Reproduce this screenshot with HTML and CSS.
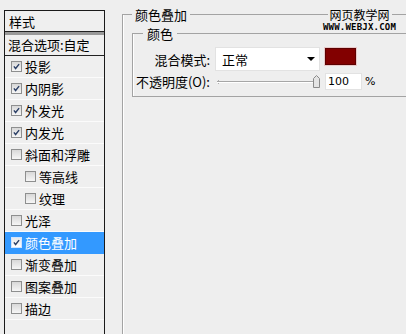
FILE: index.html
```html
<!DOCTYPE html>
<html lang="zh">
<head>
<meta charset="utf-8">
<title>图层样式</title>
<link rel="stylesheet" href="styles.css">
</head>
<body>
<div class="dialog">
  <aside class="styles-panel">
    <div class="panel-head">样式</div>
    <div class="panel-rule"></div>
    <div class="blend-row">混合选项:自定</div>
    <ul class="effects">
      <li class="effect"><span class="cb"><svg viewBox="0 0 11 11"><path d="M2.3 5.4 L4.4 8 L8.7 2.6"/></svg></span>投影</li>
      <li class="effect"><span class="cb"><svg viewBox="0 0 11 11"><path d="M2.3 5.4 L4.4 8 L8.7 2.6"/></svg></span>内阴影</li>
      <li class="effect"><span class="cb"><svg viewBox="0 0 11 11"><path d="M2.3 5.4 L4.4 8 L8.7 2.6"/></svg></span>外发光</li>
      <li class="effect"><span class="cb"><svg viewBox="0 0 11 11"><path d="M2.3 5.4 L4.4 8 L8.7 2.6"/></svg></span>内发光</li>
      <li class="effect"><span class="cb"></span>斜面和浮雕</li>
      <li class="effect sub"><span class="cb"></span>等高线</li>
      <li class="effect sub"><span class="cb"></span>纹理</li>
      <li class="effect"><span class="cb"></span>光泽</li>
      <li class="effect selected"><span class="cb"><svg viewBox="0 0 11 11"><path d="M2.3 5.4 L4.4 8 L8.7 2.6"/></svg></span>颜色叠加</li>
      <li class="effect"><span class="cb"></span>渐变叠加</li>
      <li class="effect"><span class="cb"></span>图案叠加</li>
      <li class="effect"><span class="cb"></span>描边</li>
    </ul>
  </aside>
  <main class="settings">
    <fieldset class="group outer">
      <legend>颜色叠加</legend>
      <fieldset class="group inner">
        <legend>颜色</legend>
        <div class="form">
          <label class="lbl">混合模式:</label>
          <div class="select"><span>正常</span><span class="arrow"></span></div>
          <div class="swatch"></div>
          <label class="lbl">不透明度(O):</label>
          <div class="slider">
            <span class="tick"></span>
            <span class="track"></span>
            <svg class="thumb" viewBox="0 0 7 13"><path d="M0.5 12.5 V3.5 L3.5 0.5 L6.5 3.5 V12.5 Z"/></svg>
          </div>
          <div class="num-cell"><span class="num">100</span><span class="pct">%</span></div>
        </div>
      </fieldset>
    </fieldset>
  </main>
  <div class="watermark">
    <span class="wm-cn">网页教学网</span>
    <span class="wm-en">WWW.WEBJX.COM</span>
  </div>
</div>
</body>
</html>
```
FILE: styles.css
```css
* { box-sizing: border-box; }
html, body {
  margin: 0;
  padding: 0;
  width: 406px;
  height: 334px;
  overflow: hidden;
  background: #eeeeee;
}
body {
  font-family: "Noto Sans CJK SC", "Noto Sans", sans-serif;
  font-size: 13px;
  color: #000;
}
.dialog {
  position: relative;
  display: flex;
  align-items: flex-start;
  height: 334px;
}

/* left list */
.styles-panel {
  margin: 10px 0 0 4px;
  width: 101px;
  flex: none;
  border: 1px solid #1a1a1a;
  border-bottom: none;
  background: #efefef;
  height: 324px;
}
.panel-head {
  height: 21px;
  line-height: 21px;
  padding-left: 4px;
  border-bottom: 1px solid #222;
}
.panel-rule {
  height: 3px;
  background: #999;
}
.blend-row {
  height: 21px;
  line-height: 20px;
  padding-left: 3px;
  border-bottom: 1px solid #222;
}
.effects {
  list-style: none;
  margin: 0;
  padding: 0;
}
.effect {
  display: flex;
  align-items: center;
  height: 22px;
  padding-left: 6px;
  border-bottom: 1px solid #fbfbfb;
  line-height: 21px;
}
.effect.sub { padding-left: 20px; }
.effect.selected {
  background: #3399ff;
  border-bottom-color: #3399ff;
  color: #fff;
}
.cb {
  width: 11px;
  height: 11px;
  margin-right: 3px;
  flex: none;
  border: 1px solid #8e8f8f;
  background: linear-gradient(#d8d8d8, #f6f6f6);
  display: flex;
}
.effect.selected .cb {
  border-color: #d0e4ff;
  background: linear-gradient(#e8e8e8, #ffffff);
}
.cb svg {
  width: 9px;
  height: 9px;
}
.cb path {
  fill: none;
  stroke: #2b3f66;
  stroke-width: 1.7;
}

/* right settings */
.settings {
  flex: none;
  width: 301px;
}
.group {
  margin: 0;
  padding: 0;
  border: 1px solid #a3a3a3;
  border-right: none;
  box-shadow: inset 1px 0 0 #ffffff;
}
.group legend {
  font-size: 13px;
  line-height: 15px;
  height: 15px;
}
.outer {
  margin: 7px 0 0 17px;
  width: 284px;
  height: 327px;
  border-bottom: none;
}
.outer > legend {
  margin-left: 9px;
  padding: 0 3px;
}
.inner {
  margin: 4px 0 0 9px;
  width: 274px;
  padding: 6px 0 6px 0;
}
.inner > legend {
  margin-left: 10px;
  padding: 0 4px;
}
.form {
  display: grid;
  grid-template-columns: 77px 105px auto;
  grid-template-rows: 24px 17px;
  column-gap: 5px;
  row-gap: 2px;
}
.lbl {
  text-align: right;
  align-self: center;
  line-height: 15px;
  white-space: nowrap;
}
.select {
  background: #fff;
  border: 1px solid #e2e2e2;
  display: flex;
  align-items: center;
  justify-content: space-between;
  padding: 0 4px 0 6px;
}
.arrow {
  width: 0;
  height: 0;
  border-left: 4px solid transparent;
  border-right: 4px solid transparent;
  border-top: 4px solid #000;
}
.swatch {
  width: 31px;
  height: 17px;
  margin-top: 1px;
  background: #820000;
  border: 1px solid #5c0000;
  box-shadow: 0 0 0 1px #e9c9c9;
}
.slider {
  position: relative;
}
.track {
  position: absolute;
  left: 2px;
  right: 4px;
  top: 8px;
  height: 2px;
  border-top: 1px solid #a6a6a6;
  border-bottom: 1px solid #ffffff;
}
.tick {
  position: absolute;
  left: 3px;
  top: 7px;
  width: 1px;
  height: 4px;
  background: #b0b0b0;
}
.thumb {
  position: absolute;
  left: 98px;
  top: 2px;
  width: 7px;
  height: 13px;
}
.thumb path {
  fill: #e4e4e4;
  stroke: #8a8a8a;
  stroke-width: 1;
}
.num-cell {
  display: flex;
  align-items: center;
}
.num {
  width: 37px;
  height: 17px;
  background: #fff;
  border: 1px solid #e2e2e2;
  font-family: "DejaVu Sans", "Liberation Sans", sans-serif;
  font-size: 11px;
  line-height: 15px;
  padding-left: 2px;
}
.pct {
  margin-left: 3px;
  font-family: "DejaVu Sans", "Liberation Sans", sans-serif;
  font-size: 11px;
}

/* watermark overlay */
.watermark {
  position: absolute;
  left: 323px;
  top: 7px;
  display: flex;
  flex-direction: column;
  align-items: center;
}
.wm-cn {
  background: #eeeeee;
  padding: 0 2px;
  font-size: 12px;
  line-height: 15px;
}
.wm-en {
  font-family: "DejaVu Sans Mono", monospace;
  font-weight: bold;
  font-size: 9px;
  line-height: 8px;
  margin-top: 1px;
  letter-spacing: 0.2px;
}
```
